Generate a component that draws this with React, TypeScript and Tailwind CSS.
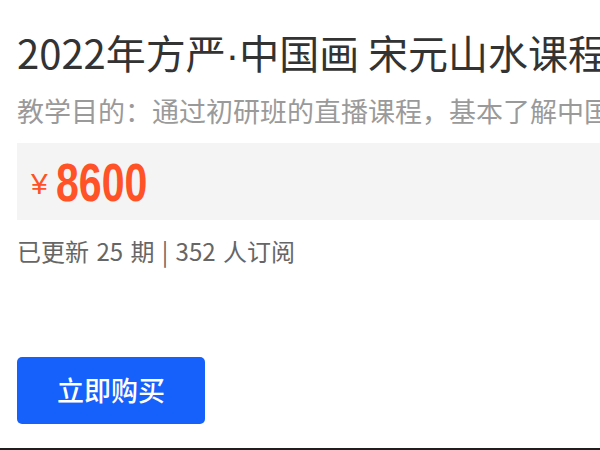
export default function App() {
  return (
    <div
      className="h-[450px] w-[600px] overflow-hidden bg-white border-b-2 border-[#1f1f1f] flex flex-col"
      style={{ fontFamily: '"Noto Sans CJK SC", "Noto Sans", sans-serif' }}
    >
      <div className="pl-[17px] pt-[28px] flex flex-col">
        <h1 className="h-[48px] whitespace-nowrap text-[40px] leading-[48px] text-[#333] font-normal">
          2022年方严
          <span className="leading-none" style={{ fontFamily: '"Liberation Sans", sans-serif' }}>·</span>
          中国画 宋元山水课程进阶班
        </h1>
        <p className="mt-[17px] h-[36px] whitespace-nowrap text-[27px] leading-[36px] text-[#9a9a9a]">
          教学目的：通过初研班的直播课程，基本了解中国画的笔墨技法
        </p>
        <div className="mt-[14px] h-[77px] bg-[#f4f4f4] flex items-center pl-[14px]">
          <span
            className="text-[30px] leading-none text-[#ff5226] mt-[4px]"
            style={{ fontFamily: '"Liberation Sans", sans-serif' }}
          >
            ¥
          </span>
          <span
            className="ml-[8px] text-[54px] leading-none font-bold text-[#ff5226] origin-left scale-x-[0.76]"
            style={{ fontFamily: '"Liberation Sans Narrow", "Liberation Sans", sans-serif' }}
          >
            8600
          </span>
        </div>
        <p className="mt-[15px] h-[32px] whitespace-nowrap text-[24px] leading-[32px] text-[#666] [word-spacing:2px]">
          已更新 25 期 | 352 人订阅
        </p>
        <button className="mt-[90px] w-[188px] h-[67px] rounded-[5px] bg-[#1661fb] text-white text-[27px] font-medium flex items-center justify-center">
          立即购买
        </button>
      </div>
    </div>
  )
}
